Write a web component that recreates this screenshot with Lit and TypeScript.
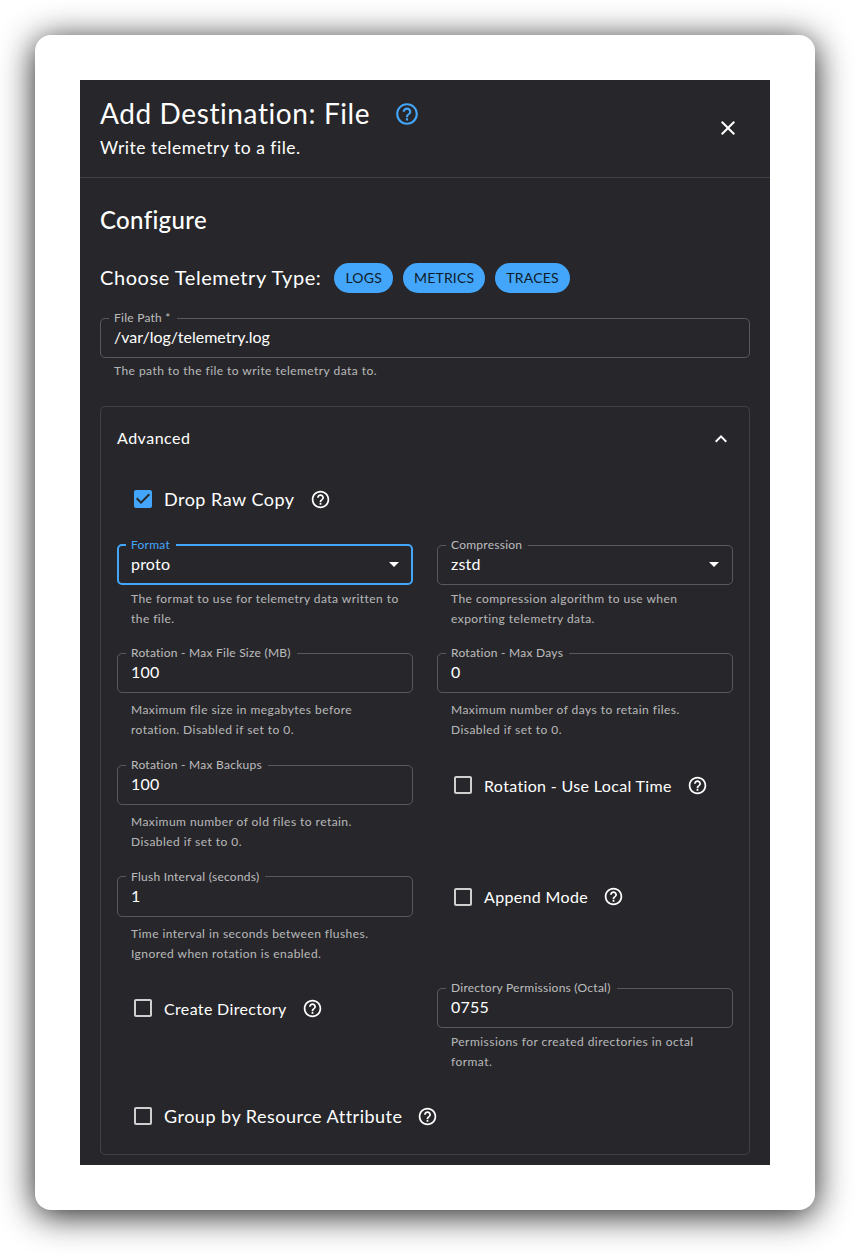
import { LitElement, html, css, svg } from 'lit';
import { customElement } from 'lit/decorators.js';

const helpPath = 'M11 18h2v-2h-2v2zm1-16C6.48 2 2 6.48 2 12s4.48 10 10 10 10-4.48 10-10S17.52 2 12 2zm0 18c-4.41 0-8-3.59-8-8s3.59-8 8-8 8 3.59 8 8-3.59 8-8 8zm0-14c-2.21 0-4 1.79-4 4h2c0-1.1.9-2 2-2s2 .9 2 2c0 2-3 1.75-3 5h2c0-2.25 3-2.5 3-5 0-2.21-1.79-4-4-4z';
const checkedPath = 'M19 3H5c-1.11 0-2 .9-2 2v14c0 1.1.89 2 2 2h14c1.11 0 2-.9 2-2V5c0-1.1-.89-2-2-2zm-9 14l-5-5 1.41-1.41L10 14.17l7.59-7.59L19 8l-9 9z';
const blankPath = 'M19 5v14H5V5h14m0-2H5c-1.1 0-2 .9-2 2v14c0 1.1.9 2 2 2h14c1.1 0 2-.9 2-2V5c0-1.1-.9-2-2-2z';

const icon = (d: string, cls: string) =>
  html`<svg class=${cls} viewBox="0 0 24 24" fill="currentColor">${svg`<path d=${d}></path>`}</svg>`;

@customElement('app-root')
export class AppRoot extends LitElement {
  static styles = css`
    :host {
      display: block;
      width: 860px;
      height: 1255px;
      box-sizing: border-box;
      padding: 35px 45px 45px 35px;
      background: #fff;
      overflow: hidden;
      font-family: 'Lato', 'Open Sans', sans-serif;
      color: #fff;
      --blue: #44a6fa;
    }
    .frame {
      height: 1175px;
      box-sizing: border-box;
      padding: 45px;
      background: #fff;
      border-radius: 16px;
      box-shadow: 0 5px 34px rgba(0, 0, 0, 0.9);
    }
    .dialog {
      height: 1085px;
      overflow: hidden;
      background: #27272b;
    }
    .head {
      height: 98px;
      box-sizing: border-box;
      padding: 17px 30px 0 20px;
      border-bottom: 1px solid rgba(255, 255, 255, 0.12);
      display: flex;
      justify-content: space-between;
    }
    .title-row {
      display: flex;
      align-items: center;
      height: 34px;
    }
    h1 {
      margin: -2px 0 0;
      font-size: 28px;
      font-weight: 400;
      line-height: 34px;
      letter-spacing: 0.6px;
    }
    .title-help {
      width: 26px;
      height: 26px;
      margin-left: 24px;
      color: var(--blue);
    }
    .sub {
      margin-top: 4px;
      font-size: 17.5px;
      line-height: 26px;
      letter-spacing: 0.5px;
    }
    .close {
      width: 24px;
      height: 24px;
      margin-top: 19px;
    }
    .body {
      padding: 25px 20px 0;
    }
    h2 {
      margin: 0;
      font-size: 24px;
      font-weight: 500;
      line-height: 34px;
      letter-spacing: 0.33px;
    }
    .types {
      display: flex;
      align-items: center;
      height: 30px;
      margin-top: 26px;
    }
    .types-label {
      font-size: 20px;
      margin: -2px 13px 0 0;
      letter-spacing: 0.56px;
    }
    .chip {
      height: 30px;
      line-height: 30px;
      padding: 0 11px;
      margin-right: 10px;
      border-radius: 15px;
      background: var(--blue);
      color: #0d1b2a;
      font-size: 14px;
      letter-spacing: 0.2px;
    }
    .path {
      margin-top: 19px;
    }
    .box {
      margin: 0;
      padding: 0 13px;
      height: 46px;
      box-sizing: border-box;
      min-width: 0;
      border: 1px solid rgba(255, 255, 255, 0.23);
      border-radius: 5px;
      display: flex;
      align-items: center;
      justify-content: space-between;
      font-size: 16px;
    }
    .box legend {
      font-size: 12px;
      line-height: 12px;
      height: 12px;
      padding: 0 6px 0 5px;
      margin-left: -5px;
      color: rgba(255, 255, 255, 0.7);
      letter-spacing: 0.25px;
    }
    .box .value {
      letter-spacing: 0.2px;
      line-height: 24px;
      margin-top: -7px;
    }
    .path .box .value {
      letter-spacing: 0;
    }
    .box.focus {
      border: 2px solid var(--blue);
      padding: 0 12px;
    }
    .box.focus legend {
      color: var(--blue);
    }
    .arrow {
      width: 24px;
      height: 24px;
      margin: -7px -7px 0 0;
      color: #fff;
    }
    .help-text {
      margin: 7px 14px 0.6px;
      font-size: 12px;
      line-height: 20px;
      letter-spacing: 0.45px;
      color: rgba(255, 255, 255, 0.68);
    }
    .select .help-text {
      margin: 4.3px 14px 0;
    }
    .tight .help-text {
      margin: 3.6px 14px 0;
    }
    .path .help-text {
      margin-top: 3px;
      margin-bottom: 0;
    }
    .advanced {
      margin-top: 25px;
      height: 749px;
      box-sizing: border-box;
      border: 1px solid rgba(255, 255, 255, 0.12);
      border-radius: 5px;
    }
    .adv-head {
      height: 60px;
      padding: 0 16px;
      display: flex;
      align-items: center;
      justify-content: space-between;
      font-size: 16px;
      letter-spacing: 0.5px;
    }
    .adv-head svg {
      width: 24px;
      height: 24px;
      margin-top: 4px;
    }
    .adv-body {
      padding: 12px 16px 0;
    }
    .check {
      height: 40px;
      display: flex;
      align-items: center;
      padding-left: 14px;
      font-size: 16px;
      letter-spacing: 0.35px;
    }
    .check.wide {
      font-size: 18px;
      letter-spacing: 0.49px;
    }
    .check.top {
      margin-bottom: 20.2px;
    }
    .check.last {
      margin-top: 24.5px;
    }
    .grid {
      display: grid;
      grid-template-columns: 296px 296px;
      column-gap: 24px;
      row-gap: 18px;
    }
    .grid .check {
      margin-top: 6px;
    }
    .box-icon {
      width: 24px;
      height: 24px;
      margin-right: 9px;
      color: rgba(255, 255, 255, 0.78);
    }
    .box-icon.on {
      color: var(--blue);
    }
    .check-help {
      width: 21px;
      height: 21px;
      margin-left: 15px;
    }
  `;

  field(label: string, value: string, help: string, opts: { select?: boolean; focus?: boolean; tight?: boolean } = {}) {
    return html`
      <div class="${opts.select ? 'select' : ''} ${opts.tight ? 'tight' : ''}">
        <fieldset class="box ${opts.focus ? 'focus' : ''}">
          <legend>${label}</legend>
          <span class="value">${value}</span>
          ${opts.select ? icon('M7 10l5 5 5-5z', 'arrow') : ''}
        </fieldset>
        <div class="help-text">${help}</div>
      </div>
    `;
  }

  check(label: string, cls = '', on = false) {
    return html`
      <div class="check ${cls}">
        ${icon(on ? checkedPath : blankPath, on ? 'box-icon on' : 'box-icon')}
        <span>${label}</span>
        ${icon(helpPath, 'check-help')}
      </div>
    `;
  }

  render() {
    return html`
      <div class="frame">
        <div class="dialog">
          <div class="head">
            <div>
              <div class="title-row">
                <h1>Add Destination: File</h1>
                ${icon(helpPath, 'title-help')}
              </div>
              <div class="sub">Write telemetry to a file.</div>
            </div>
            ${icon('M19 6.41 17.59 5 12 10.59 6.41 5 5 6.41 10.59 12 5 17.59 6.41 19 12 13.41 17.59 19 19 17.59 13.41 12z', 'close')}
          </div>
          <div class="body">
            <h2>Configure</h2>
            <div class="types">
              <span class="types-label">Choose Telemetry Type:</span>
              <span class="chip">LOGS</span>
              <span class="chip">METRICS</span>
              <span class="chip">TRACES</span>
            </div>
            <div class="path">
              ${this.field('File Path *', '/var/log/telemetry.log', 'The path to the file to write telemetry data to.')}
            </div>
            <div class="advanced">
              <div class="adv-head">
                <span>Advanced</span>
                ${icon('M12 8l-6 6 1.41 1.41L12 10.83l4.59 4.58L18 14z', '')}
              </div>
              <div class="adv-body">
                ${this.check('Drop Raw Copy', 'top wide', true)}
                <div class="grid">
                  ${this.field('Format', 'proto', 'The format to use for telemetry data written to the file.', { select: true, focus: true })}
                  ${this.field('Compression', 'zstd', 'The compression algorithm to use when exporting telemetry data.', { select: true })}
                  ${this.field('Rotation - Max File Size (MB)', '100', 'Maximum file size in megabytes before rotation. Disabled if set to 0.')}
                  ${this.field('Rotation - Max Days', '0', 'Maximum number of days to retain files. Disabled if set to 0.')}
                  ${this.field('Rotation - Max Backups', '100', 'Maximum number of old files to retain. Disabled if set to 0.')}
                  ${this.check('Rotation - Use Local Time')}
                  ${this.field('Flush Interval (seconds)', '1', 'Time interval in seconds between flushes. Ignored when rotation is enabled.')}
                  ${this.check('Append Mode')}
                  ${this.check('Create Directory')}
                  ${this.field('Directory Permissions (Octal)', '0755', 'Permissions for created directories in octal format.', { tight: true })}
                </div>
                ${this.check('Group by Resource Attribute', 'last wide')}
              </div>
            </div>
          </div>
        </div>
      </div>
    `;
  }
}
